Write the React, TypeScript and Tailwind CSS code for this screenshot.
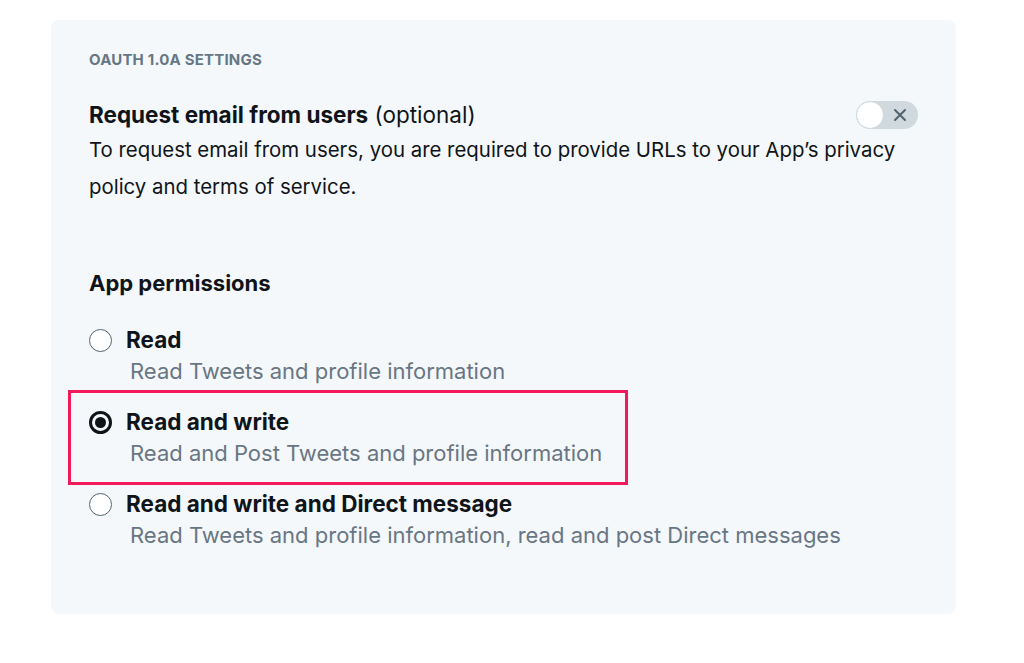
import { FC } from 'react';

// ~ ~ ~ ~ ~ ~ ~ ~ ~ ~ ~ ~ ~ ~ ~ ~ ~ ~ ~ ~ ~ ~ Radio option

interface IOption {
  label: string;
  note: string;
  checked?: boolean;
}

const Radio:FC<{ checked?: boolean }> = ({ checked }) => (
  checked ? (
    <span className="flex items-center justify-center w-[23px] h-[23px] rounded-full border-[3px] border-[#0f1419] shrink-0">
      <span className="block w-[11px] h-[11px] rounded-full bg-[#0f1419]" />
    </span>
  ) : (
    <span className="block w-[23px] h-[23px] rounded-full border-[1.5px] border-[#536471] bg-white shrink-0" />
  )
);

const Option:FC<IOption> = ({ label, note, checked }) => (
  <div className="flex flex-col">
    <div className="flex items-center gap-[14px] h-[30px]">
      <Radio checked={checked} />
      <span className="text-[22.5px] font-bold text-[#0f1419]">{label}</span>
    </div>
    <div className="pl-[41px] h-[32px] leading-[32px] text-[22px] text-[#687684]">{note}</div>
  </div>
);

// ~ ~ ~ ~ ~ ~ ~ ~ ~ ~ ~ ~ ~ ~ ~ ~ ~ ~ ~ ~ ~ ~ Page

export const App:FC = () => {
  return (
    <div className="w-[1024px] h-[663px] bg-white pt-[20px] pl-[51px]" style={{ fontFamily: 'Inter, "Noto Sans", sans-serif' }}>
      <section className="relative w-[905px] h-[594px] rounded-[8px] bg-[#f5f8fa] pt-[30px] px-[38px]">

        <h3 className="text-[15px] leading-[20px] font-bold text-[#657786] tracking-[0.2px]">
          OAUTH 1.0A SETTINGS
        </h3>

        <div className="mt-[30px] flex items-start justify-between">
          <div className="text-[22.5px] leading-[30px] text-[#0f1419] whitespace-nowrap">
            <span className="font-bold">Request email from users</span> (optional)
          </div>
          <div className="mt-[1px] flex items-center w-[62px] h-[28px] rounded-full bg-[#cfd9de]">
            <span className="block w-[28px] h-[28px] rounded-full bg-white border border-[#cfd9de]" />
            <svg width="16" height="16" viewBox="0 0 16 16" className="ml-[8px]">
              <path d="M3 3 L13 13 M13 3 L3 13" stroke="#536471" strokeWidth="2" strokeLinecap="round" />
            </svg>
          </div>
        </div>

        <p className="mt-[1px] text-[20.4px] leading-[37px] text-[#0f1419] whitespace-nowrap">
          To request email from users, you are required to provide URLs to your App’s privacy
          <br />
          policy and terms of service.
        </p>

        <h4 className="mt-[63px] text-[22px] leading-[30px] font-bold text-[#0f1419]">
          App permissions
        </h4>

        <div className="mt-[27px] flex flex-col gap-[20px]">
          <Option label="Read" note="Read Tweets and profile information" />
          <div className="relative">
            <Option label="Read and write" note="Read and Post Tweets and profile information" checked />
            <div className="absolute left-[-21px] top-[-17px] w-[560px] h-[95px] border-[3px] border-[#f4195b]" />
          </div>
          <Option label="Read and write and Direct message" note="Read Tweets and profile information, read and post Direct messages" />
        </div>

      </section>
    </div>
  );
};

// ~ ~ ~ ~ ~ ~ ~ ~ ~ ~ ~ ~ ~ ~ ~ ~ ~ ~ ~ ~ ~ ~ Export

export default App;
